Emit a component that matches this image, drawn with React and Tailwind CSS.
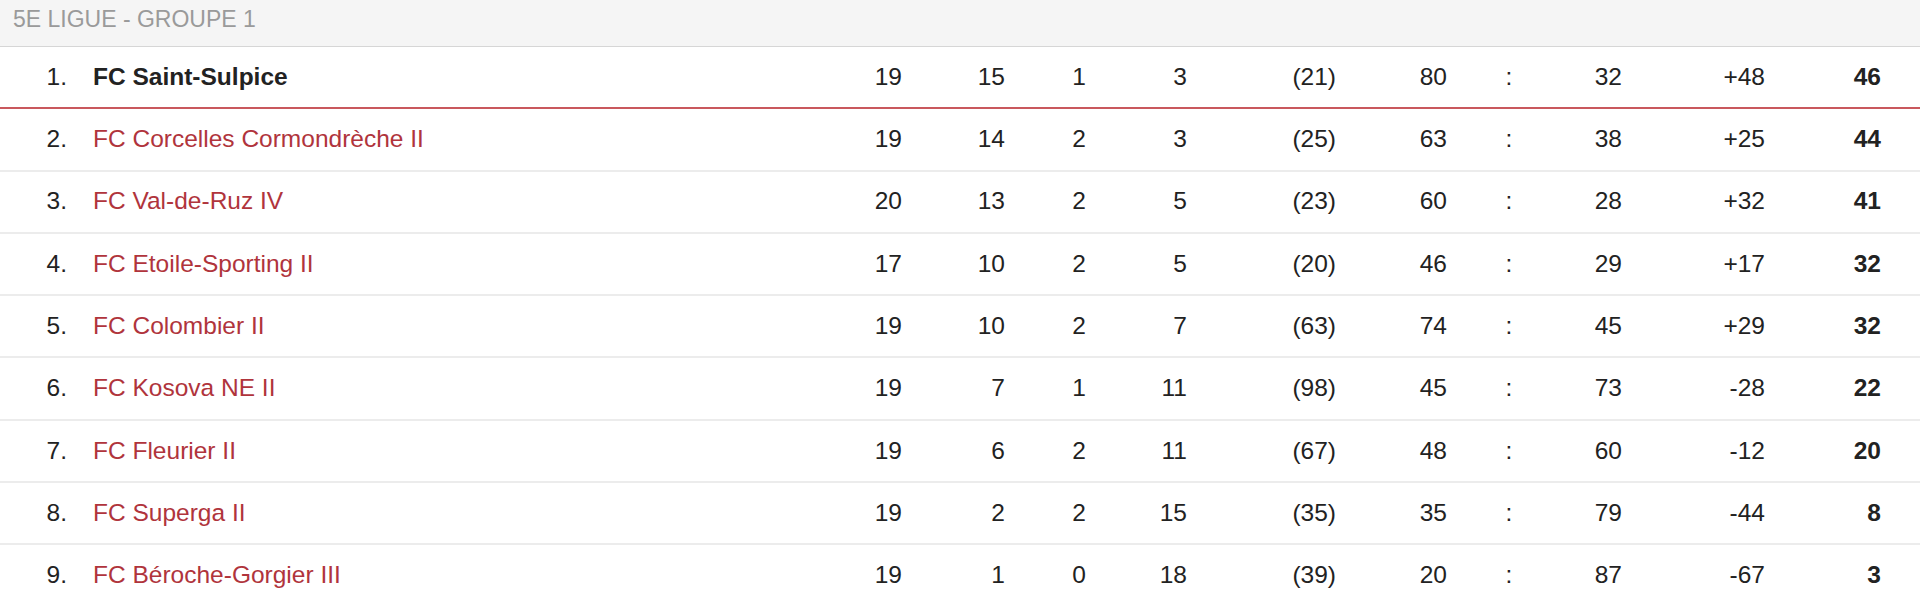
import React from 'react';

const rows = [
  { rank: 1, team: 'FC Saint-Sulpice', p: 19, w: 15, d: 1, l: 3, fp: '(21)', gf: 80, ga: 32, diff: '+48', pts: 46 },
  { rank: 2, team: 'FC Corcelles Cormondrèche II', p: 19, w: 14, d: 2, l: 3, fp: '(25)', gf: 63, ga: 38, diff: '+25', pts: 44 },
  { rank: 3, team: 'FC Val-de-Ruz IV', p: 20, w: 13, d: 2, l: 5, fp: '(23)', gf: 60, ga: 28, diff: '+32', pts: 41 },
  { rank: 4, team: 'FC Etoile-Sporting II', p: 17, w: 10, d: 2, l: 5, fp: '(20)', gf: 46, ga: 29, diff: '+17', pts: 32 },
  { rank: 5, team: 'FC Colombier II', p: 19, w: 10, d: 2, l: 7, fp: '(63)', gf: 74, ga: 45, diff: '+29', pts: 32 },
  { rank: 6, team: 'FC Kosova NE II', p: 19, w: 7, d: 1, l: 11, fp: '(98)', gf: 45, ga: 73, diff: '-28', pts: 22 },
  { rank: 7, team: 'FC Fleurier II', p: 19, w: 6, d: 2, l: 11, fp: '(67)', gf: 48, ga: 60, diff: '-12', pts: 20 },
  { rank: 8, team: 'FC Superga II', p: 19, w: 2, d: 2, l: 15, fp: '(35)', gf: 35, ga: 79, diff: '-44', pts: 8 },
  { rank: 9, team: 'FC Béroche-Gorgier III', p: 19, w: 1, d: 0, l: 18, fp: '(39)', gf: 20, ga: 87, diff: '-67', pts: 3 },
];

export default function App() {
  return (
    <div className="w-[1920px] h-[604px] overflow-hidden bg-white text-[#222] font-['Liberation_Sans',Arial,sans-serif]">
      {/* Group header */}
      <div className="h-[47px] bg-[#f5f5f5] border-b border-[#d6d6d6] flex items-center pl-[13px] pb-[7px]">
        <span className="text-[23px] text-[#9a9a9a]">5E LIGUE - GROUPE 1</span>
      </div>

      {/* Standings */}
      {rows.map((r) => (
        <div
          key={r.rank}
          className={`h-[62.3px] grid grid-cols-[67px_733px_102px_103px_81px_101px_149px_111px_124px_51px_143px_116px_1fr] items-center text-[24.5px] border-b-2 ${
            r.rank === 1 ? 'border-[#c9585d]' : 'border-[#ececec]'
          }`}
        >
          <div className="text-right">{r.rank}.</div>
          <div className={`pl-[26px] ${r.rank === 1 ? 'font-bold text-[#222]' : 'text-[#b0343c]'}`}>{r.team}</div>
          <div className="text-right">{r.p}</div>
          <div className="text-right">{r.w}</div>
          <div className="text-right">{r.d}</div>
          <div className="text-right">{r.l}</div>
          <div className="text-right">{r.fp}</div>
          <div className="text-right">{r.gf}</div>
          <div className="text-center">:</div>
          <div className="text-right">{r.ga}</div>
          <div className="text-right">{r.diff}</div>
          <div className="text-right font-bold">{r.pts}</div>
          <div />
        </div>
      ))}
    </div>
  );
}
